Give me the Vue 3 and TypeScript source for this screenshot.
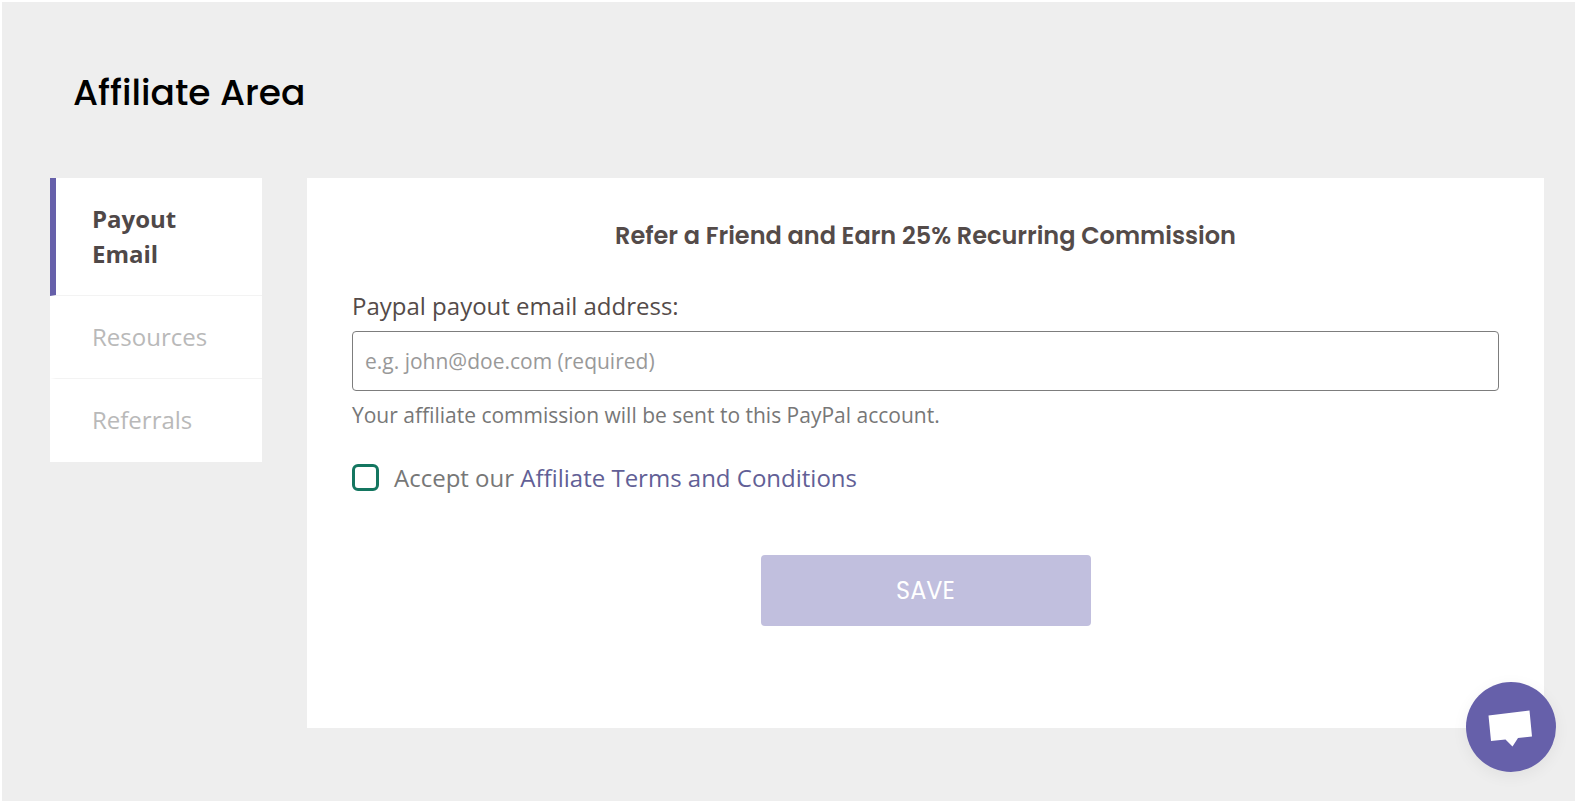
<script setup lang="ts">
import { computed, ref } from 'vue'

interface Tab {
  id: string
  label: string
}

const tabs: Tab[] = [
  { id: 'payout', label: 'Payout Email' },
  { id: 'resources', label: 'Resources' },
  { id: 'referrals', label: 'Referrals' },
]

const activeTab = ref('payout')
const email = ref('')
const accepted = ref(false)
const canSave = computed(() => accepted.value && email.value.includes('@'))
</script>

<template>
  <div class="page">
    <h1 class="page-title">Affiliate Area</h1>
    <div class="layout">
      <nav class="tabs" aria-label="Affiliate sections">
        <a
          v-for="tab in tabs"
          :key="tab.id"
          class="tab"
          :class="{ active: tab.id === activeTab }"
          :href="'#' + tab.id"
          @click.prevent="activeTab = tab.id"
        >{{ tab.label }}</a>
      </nav>
      <main class="card">
        <h2 class="card-title">Refer a Friend and Earn 25% Recurring Commission</h2>
        <form class="form" @submit.prevent>
          <label class="label" for="email">Paypal payout email address:</label>
          <input
            id="email"
            v-model="email"
            class="field"
            type="email"
            placeholder="e.g. john@doe.com (required)"
            aria-describedby="email-help"
          />
          <p id="email-help" class="help">Your affiliate commission will be sent to this PayPal account.</p>
          <div class="terms">
            <input id="terms" v-model="accepted" class="check" type="checkbox" />
            <label for="terms">Accept our <a class="link" href="#terms">Affiliate Terms and Conditions</a></label>
          </div>
          <button class="save" type="submit" :disabled="!canSave">SAVE</button>
        </form>
      </main>
    </div>
    <button class="chat" type="button" aria-label="Open chat">
      <svg viewBox="0 0 90 90" aria-hidden="true">
        <path d="M22.5 33.5 63.5 28.5 66 54.5 52 56 46.5 64.5 39.5 57.5 25 59Z" fill="#fff" />
      </svg>
    </button>
  </div>
</template>

<style>
body {
  margin: 0;
}
</style>

<style scoped>
.page {
  box-sizing: border-box;
  min-height: 100vh;
  padding: 64px 31px 73px 48px;
  border-top: 2px solid #fff;
  border-left: 2px solid #fff;
  background: #eee;
  font-family: "Open Sans", "Noto Sans", sans-serif;
  font-size: 24px;
  line-height: 35px;
}

.page-title {
  margin: 0 0 58px 23px;
  color: #000;
  font-family: Poppins, Inter, sans-serif;
  font-size: 36px;
  font-weight: 500;
  line-height: 54px;
}

.layout {
  display: flex;
  align-items: flex-start;
  gap: 45px;
}

.tabs {
  flex: 0 0 212px;
  background: #fff;
}

.tab {
  display: block;
  padding: 23px 36px 24px;
  border-bottom: 1px solid #f3f3f3;
  border-left: 6px solid transparent;
  color: #b9b9b9;
  text-decoration: none;
}

.tab:last-child {
  border-bottom-color: transparent;
}

.tab.active {
  border-left-color: #6660aa;
  color: #4f4848;
  font-weight: 700;
}

.card {
  box-sizing: border-box;
  flex: 1;
  min-width: 0;
  padding: 40px 45px 102px;
  background: #fff;
}

.card-title {
  margin: 0 0 35px;
  color: #544b49;
  font-family: Poppins, Inter, sans-serif;
  font-size: 24px;
  font-weight: 600;
  line-height: 35px;
  text-align: center;
}

.form {
  display: flex;
  flex-direction: column;
}

.label {
  margin-bottom: 8px;
  color: #544b49;
}

.field {
  box-sizing: border-box;
  width: 100%;
  height: 60px;
  padding: 0 12px;
  border: 1px solid #7d7d7d;
  border-radius: 4px;
  background: #fff;
  color: #544b49;
  font-family: inherit;
  font-size: 21px;
}

.field::placeholder {
  color: #999;
  opacity: 1;
}

.help {
  margin: 8px 0 29px;
  color: #777;
  font-size: 21px;
  line-height: 32px;
}

.terms {
  display: flex;
  align-items: center;
  gap: 15px;
  color: #777;
}

.check {
  flex: none;
  appearance: none;
  width: 27px;
  height: 27px;
  margin: 0;
  border: 3px solid #147660;
  border-radius: 6px;
  background: #fff;
}

.check:checked {
  background: #147660;
  box-shadow: inset 0 0 0 3px #fff;
}

.link {
  color: #625f96;
  text-decoration: none;
}

.save {
  align-self: center;
  width: 330px;
  height: 71px;
  margin-top: 60px;
  border: 0;
  border-radius: 4px;
  background: #6660aa;
  color: #fff;
  font-family: Poppins, Inter, sans-serif;
  font-size: 24px;
}

.save:disabled {
  background: #c1bfde;
}

.chat {
  position: fixed;
  right: 19px;
  bottom: 29px;
  width: 90px;
  height: 90px;
  padding: 0;
  border: 0;
  border-radius: 50%;
  background: #6660aa;
  box-shadow: 0 4px 16px rgba(0, 0, 0, 0.06);
}

.chat svg {
  display: block;
  width: 100%;
}
</style>
